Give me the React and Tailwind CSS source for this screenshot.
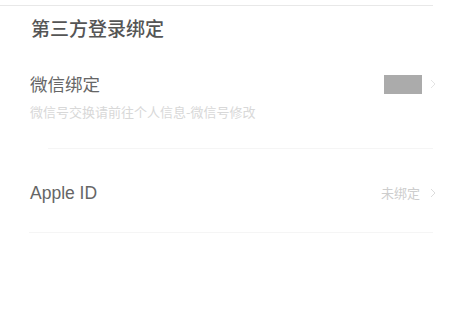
import React from 'react'

function Chevron({ className }) {
  return (
    <svg className={className} width="6" height="10" viewBox="0 0 6 10" fill="none">
      <path d="M1 1l4 4-4 4" stroke="currentColor" strokeWidth="1" />
    </svg>
  )
}

export default function App() {
  return (
    <div
      className="w-[451px] h-[334px] bg-white overflow-hidden"
      style={{ fontFamily: '"Noto Sans CJK SC", "Noto Sans", sans-serif' }}
    >
      <div className="w-[433px]">
        <div className="h-[1px] mt-[5px] bg-[#e8e8e8]" />

        {/* Title */}
        <h1 className="pl-[31px] pt-[9px] text-[19px] leading-[26px] font-medium text-[#555]">
          第三方登录绑定
        </h1>

        {/* WeChat */}
        <div className="pl-[30px] pt-[32px]">
          <div className="flex items-center justify-between">
            <span className="text-[17.5px] leading-[22px] text-[#666]">微信绑定</span>
            <div className="flex items-center gap-[8px]">
              <div className="w-[38px] h-[19px] bg-[#ababab]" />
              <Chevron className="text-[#e4e4e4] -mr-[3px]" />
            </div>
          </div>
          <p className="mt-[9px] text-[13px] leading-[16px] text-[#d8d8d8]">
            微信号交换请前往个人信息-微信号修改
          </p>
        </div>
        <div className="ml-[48px] mt-[28px] h-[1px] bg-[#f5f5f5]" />

        {/* Apple ID */}
        <div className="pl-[30px] pt-[33px] flex items-center justify-between">
          <span className="text-[17.5px] leading-[22px] text-[#666]" style={{ fontFamily: '"Liberation Sans", "Noto Sans CJK SC", sans-serif' }}>
            Apple ID
          </span>
          <div className="flex items-center gap-[10px]">
            <span className="text-[13px] leading-[16px] text-[#cdcdcd]">未绑定</span>
            <Chevron className="text-[#dcdcdc] -mr-[3px]" />
          </div>
        </div>
        <div className="ml-[29px] mt-[28px] h-[1px] bg-[#f5f5f5]" />
      </div>
    </div>
  )
}
